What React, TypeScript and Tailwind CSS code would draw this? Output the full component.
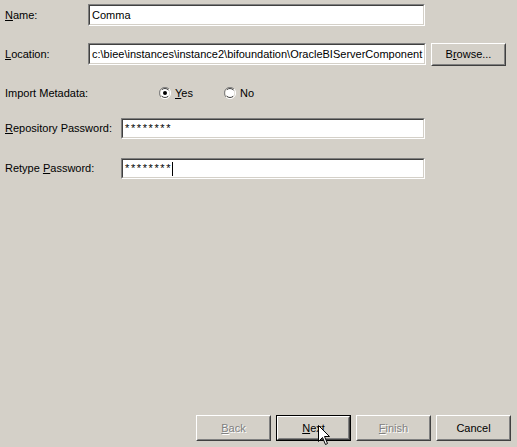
import React from "react"

const font = { fontFamily: '"Liberation Sans", Arial, sans-serif' }

function Field({ value, caret, secret }: { value: string; caret?: boolean; secret?: boolean }) {
  return (
    <div className="h-full w-full border border-t-[#808080] border-l-[#808080] border-b-white border-r-white">
      <div className="flex h-full w-full items-center overflow-hidden whitespace-nowrap border border-t-[#404040] border-l-[#404040] border-b-[#d4d0c8] border-r-[#d4d0c8] bg-white pl-[2px] text-[11px] text-black">
        <span className={secret ? "tracking-[1.6px]" : ""}>{value}</span>
        {caret && <span className="inline-block h-[14px] w-[1px] bg-black" />}
      </div>
    </div>
  )
}

function WinButton({
  label,
  ul,
  disabled,
  focused,
  className = "",
}: {
  label: string
  ul: number
  disabled?: boolean
  focused?: boolean
  className?: string
}) {
  const text =
    ul < 0 ? (
      label
    ) : (
      <>
        {label.slice(0, ul)}
        <span className="underline">{label[ul]}</span>
        {label.slice(ul + 1)}
      </>
    )
  const inner = (
    <div className="h-full w-full border border-t-white border-l-white border-b-[#404040] border-r-[#404040]">
      <div className="flex h-full w-full items-center justify-center border border-t-[#d4d0c8] border-l-[#d4d0c8] border-b-[#808080] border-r-[#808080] text-[11px]">
        {disabled ? (
          <span className="text-[#808080] [text-shadow:1px_1px_0_#ffffff]">{text}</span>
        ) : (
          <span className="text-black">{text}</span>
        )}
      </div>
    </div>
  )
  return (
    <div className={`w-[75px] ${className}`}>
      {focused ? <div className="h-full w-full border border-black">{inner}</div> : inner}
    </div>
  )
}

function Radio({ checked }: { checked?: boolean }) {
  return (
    <svg width="12" height="12" viewBox="0 0 12 12">
      <path d="M10 2 A5.5 5.5 0 0 0 2 10" fill="none" stroke="#808080" />
      <path d="M2 10 A5.5 5.5 0 0 0 10 2" fill="none" stroke="#ffffff" />
      <circle cx="6" cy="6" r="4.5" fill="#ffffff" stroke="#404040" strokeWidth="1" strokeDasharray="7 7" strokeDashoffset="-3.5" />
      {checked && <circle cx="6" cy="6" r="2" fill="#000" />}
    </svg>
  )
}

export default function App() {
  return (
    <div className="relative h-[447px] w-[517px] overflow-hidden bg-[#d4d0c8] text-[11px] text-black" style={font}>
      <div className="flex flex-col">
        <div className="mt-[4px] flex h-[22px] items-center">
          <div className="w-[88px] pl-[5px]">
            <span className="underline">N</span>ame:
          </div>
          <div className="h-full w-[337px]">
            <Field value="Comma" />
          </div>
        </div>

        <div className="mt-[17px] flex h-[22px] items-center">
          <div className="w-[88px] pl-[5px]">
            <span className="underline">L</span>ocation:
          </div>
          <div className="h-full w-[338px]">
            <Field value="c:\biee\instances\instance2\bifoundation\OracleBIServerComponent" />
          </div>
          <WinButton label="Browse..." ul={1} className="ml-[5px] h-[23px]" />
        </div>

        <div className="mt-[19px] flex h-[18px] items-center">
          <div className="w-[159px] pl-[5px]">Import Metadata:</div>
          <div className="flex w-[65px] items-center">
            <Radio checked />
            <span className="ml-[4px]">
              <span className="underline">Y</span>es
            </span>
          </div>
          <Radio />
          <span className="ml-[4px]">No</span>
        </div>

        <div className="mt-[16px] flex h-[21px] items-center">
          <div className="w-[121px] pl-[5px]">
            <span className="underline">R</span>epository Password:
          </div>
          <div className="h-full w-[304px]">
            <Field value="********" secret />
          </div>
        </div>

        <div className="mt-[19px] flex h-[21px] items-center">
          <div className="w-[121px] pl-[5px]">
            Retype <span className="underline">P</span>assword:
          </div>
          <div className="h-full w-[304px]">
            <Field value="********" secret caret />
          </div>
        </div>
      </div>

      <div className="absolute left-[196px] top-[415px] flex h-[26px] gap-[5px]">
        <WinButton label="Back" ul={0} disabled />
        <WinButton label="Next" ul={0} focused />
        <WinButton label="Finish" ul={0} disabled />
        <WinButton label="Cancel" ul={-1} />
      </div>

      <svg className="absolute left-[318px] top-[425px]" width="13" height="21" viewBox="0 0 13 21">
        <path
          d="M0.5 0.5 L0.5 16.5 L4.5 12.5 L7.5 19.5 L9.5 18.5 L6.5 11.5 L11.5 11.5 Z"
          fill="#ffffff"
          stroke="#000000"
          strokeWidth="1"
        />
      </svg>
    </div>
  )
}
